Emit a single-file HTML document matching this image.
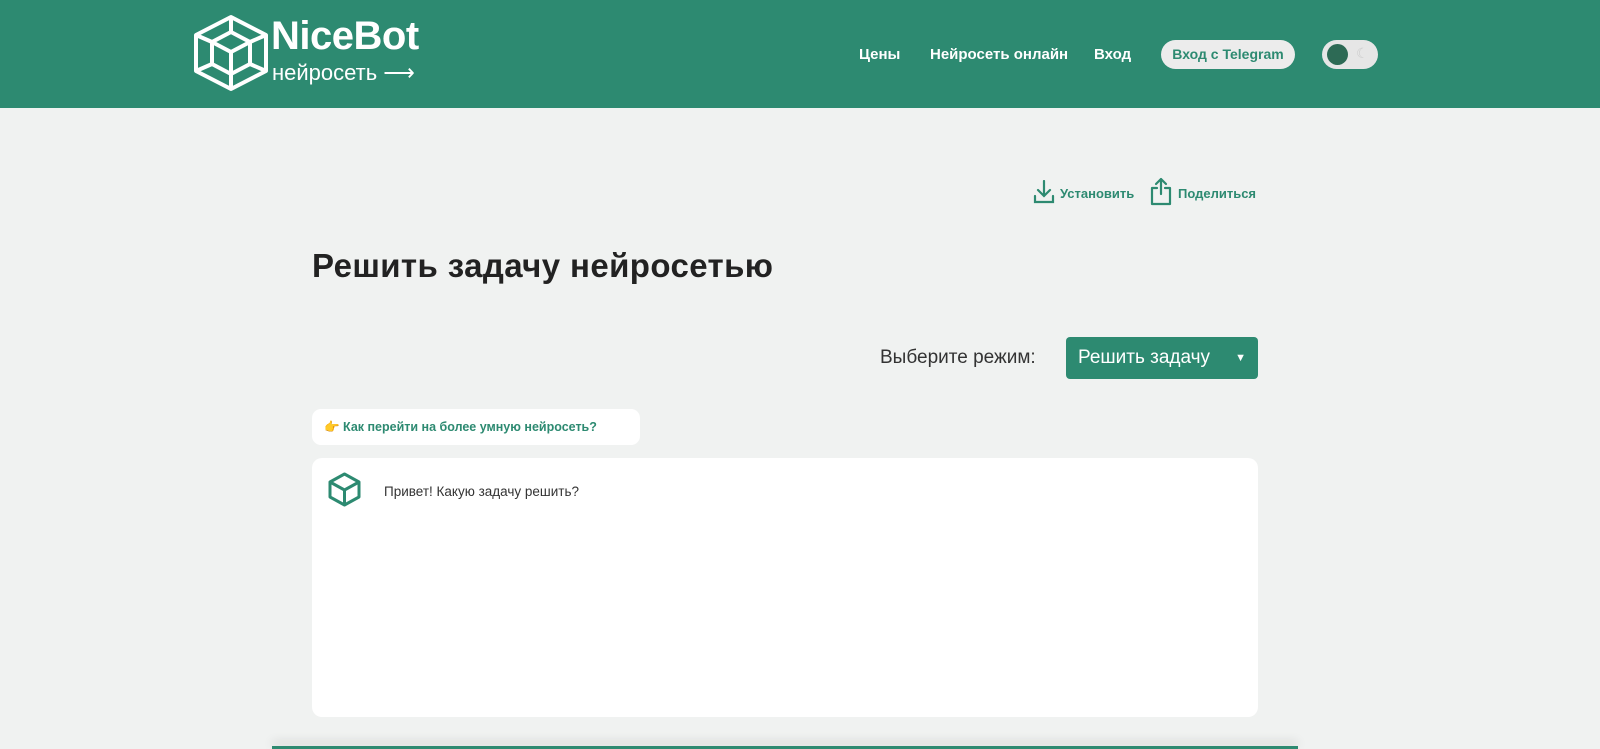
<!DOCTYPE html>
<html><head><meta charset="utf-8"><style>
*{margin:0;padding:0;box-sizing:border-box}
body{width:1600px;height:749px;overflow:hidden;background:#f0f2f1;font-family:"Liberation Sans",sans-serif;position:relative}
.hdr{position:absolute;left:0;top:0;width:1600px;height:108px;background:#2d8a71}
.nav{position:absolute;top:46px;color:#fff;font-size:15px;font-weight:bold}
.tg{position:absolute;left:1161px;top:40px;width:134px;height:29px;border-radius:15px;background:#ececec;color:#2d8a71;font-weight:bold;font-size:14px;line-height:29px;text-align:center}
.tog{position:absolute;left:1322px;top:40px;width:56px;height:29px;border-radius:15px;background:#e6e6e6}
.tog i{position:absolute;left:5px;top:4px;width:21px;height:21px;border-radius:50%;background:#2d6a55}
.act{position:absolute;top:186px;color:#2d8a71;font-size:13px;font-weight:bold}
h1{position:absolute;left:312px;top:247px;font-size:33px;color:#222;font-weight:bold;letter-spacing:0.4px}
.sel{position:absolute;left:1066px;top:337px;width:192px;height:42px;background:#2d8a71;border-radius:4px;color:#fff;font-size:19px;line-height:42px;padding-left:12px}
.pill{position:absolute;left:312px;top:409px;width:328px;height:36px;background:#fff;border-radius:9px;color:#2d8a71;font-size:12.5px;font-weight:bold;line-height:36px;padding-left:12px}
.chat{position:absolute;left:312px;top:458px;width:946px;height:259px;background:#fff;border-radius:10px}
</style></head><body>
<div class="hdr">
<svg style="position:absolute;left:193px;top:14px" width="76" height="78" viewBox="0 0 76 78" fill="none" stroke="#fff" stroke-width="4" stroke-linejoin="round">
<polygon points="38,3 73,21 73,57 38,75 3,57 3,21"/>
<polygon points="38,18 57,28 57,50 38,60 19,50 19,28"/>
<path d="M19,28 L38,38 L57,28 M38,38 V60 M38,3 V18 M3,21 L19,28 M73,21 L57,28 M3,57 L19,50 M73,57 L57,50 M38,75 V60"/>
</svg>
<div style="position:absolute;left:271px;top:14px;color:#fff;font-size:40px;font-weight:bold;letter-spacing:-0.5px">NiceBot</div>
<div style="position:absolute;left:272px;top:60px;color:#fff;font-size:22px">нейросеть ⟶</div>
<div class="nav" style="left:859px">Цены</div>
<div class="nav" style="left:930px">Нейросеть онлайн</div>
<div class="nav" style="left:1094px">Вход</div>
<div class="tg">Вход с Telegram</div>
<div class="tog"><i></i><span style="position:absolute;left:34px;top:5px;color:#ccc;font-size:14px">☾</span></div>
</div>
<svg style="position:absolute;left:1033px;top:180px" width="22" height="25" viewBox="0 0 22 25" fill="none" stroke="#2d8a71" stroke-width="2.2" stroke-linecap="round"><path d="M11 1V16M5 10L11 16L17 10M2 16V22H20V16"/></svg>
<div class="act" style="left:1060px">Установить</div>
<svg style="position:absolute;left:1150px;top:177px" width="22" height="29" viewBox="0 0 22 29" fill="none" stroke="#2d8a71" stroke-width="2.2" stroke-linecap="round" stroke-linejoin="round"><path d="M11 17V2M6 7L11 2L16 7M7 11H2V27H20V11H15"/></svg>
<div class="act" style="left:1178px">Поделиться</div>
<h1>Решить задачу нейросетью</h1>
<div style="position:absolute;left:880px;top:347px;font-size:19px;color:#333">Выберите режим:</div>
<div class="sel">Решить задачу<span style="position:absolute;right:12px;top:0;font-size:11px">▼</span></div>
<div class="pill">👉 Как перейти на более умную нейросеть?</div>
<div class="chat">
<svg style="position:absolute;left:16px;top:14px" width="33" height="35" viewBox="0 0 33 35" fill="none" stroke="#2d8a71" stroke-width="3" stroke-linejoin="round"><polygon points="16.5,2 31,10 31,25 16.5,33 2,25 2,10"/><path d="M2,10 L16.5,18 L31,10 M16.5,18 V33"/></svg>
<div style="position:absolute;left:72px;top:26px;font-size:13.5px;color:#333">Привет! Какую задачу решить?</div>
</div>
<div style="position:absolute;left:272px;top:746px;width:1026px;height:3px;background:#2d8a71;box-shadow:0 -4px 10px rgba(0,0,0,.2)"></div>
</body></html>
